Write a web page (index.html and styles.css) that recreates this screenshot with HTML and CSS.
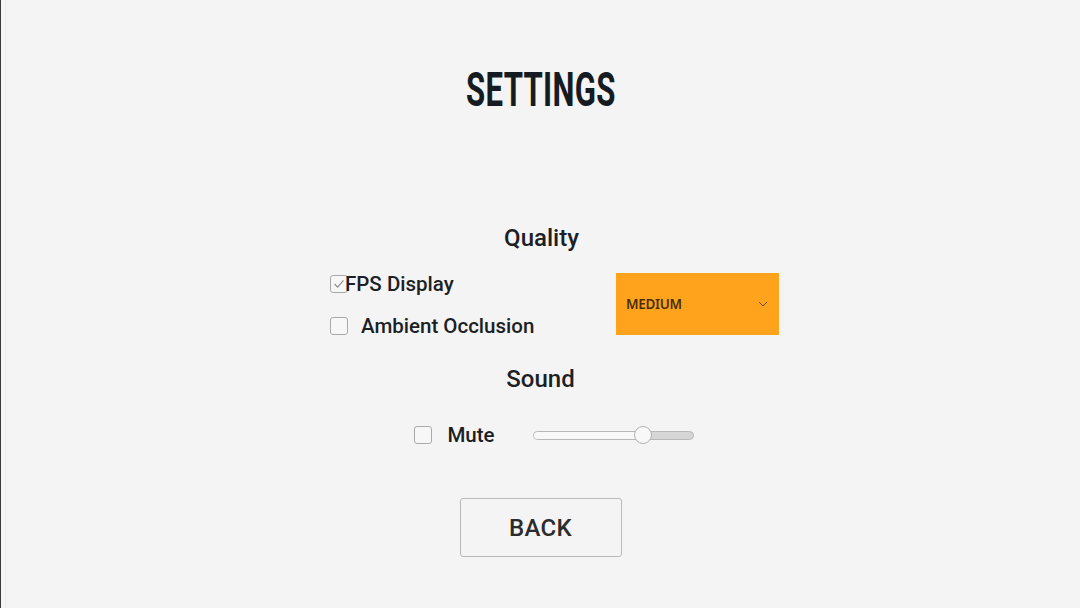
FILE: index.html
```html
<!DOCTYPE html>
<html>
<head>
<meta charset="utf-8">
<link rel="stylesheet" href="styles.css">
</head>
<body>
<div class="screen">
  <h1 class="title"><span class="title-text">SETTINGS</span></h1>
  <h2 class="section-title quality-title">Quality</h2>
  <div class="quality-row">
    <div class="checks">
      <label class="check check-tight">
        <span class="box checked"><svg viewBox="0 0 18 18" width="18" height="18"><path d="M4 9 L7.5 12.5 L14 5" fill="none" stroke="#8a8a8a" stroke-width="1.2"/></svg></span>
        <span class="check-label">FPS Display</span>
      </label>
      <label class="check">
        <span class="box"></span>
        <span class="check-label">Ambient Occlusion</span>
      </label>
    </div>
    <div class="dropdown">
      <span class="dropdown-text">MEDIUM</span>
      <svg class="chevron" viewBox="0 0 10 6" width="10" height="6"><path d="M1 1 L5 5 L9 1" fill="none" stroke="#6b4a1a" stroke-width="1"/></svg>
    </div>
  </div>
  <h2 class="section-title sound-title">Sound</h2>
  <div class="sound-row">
    <label class="check">
      <span class="box"></span>
      <span class="check-label">Mute</span>
    </label>
    <div class="slider">
      <div class="slider-fill" style="width:69%"></div>
      <div class="slider-thumb" style="left:69%"></div>
    </div>
  </div>
  <button class="back">BACK</button>
</div>
</body>
</html>
```
FILE: styles.css
```css
html, body {
  margin: 0;
  padding: 0;
  height: 100%;
}
body {
  background: #f4f4f4;
  font-family: Roboto, "Liberation Sans", sans-serif;
  color: #1c1f24;
}
.screen {
  box-sizing: border-box;
  height: 608px;
  border-left: 1px solid #3a3a3a;
  display: flex;
  flex-direction: column;
  align-items: center;
  position: relative;
}
.screen::before {
  content: "";
  position: absolute;
  left: 4px;
  top: 0;
  bottom: 0;
  width: 1px;
  background: #ebebeb;
}
.title {
  margin: 60px 0 0;
  font-family: Roboto, "Liberation Sans", sans-serif;
  font-weight: 700;
  font-size: 49px;
  line-height: 60px;
  color: #161b22;
  text-align: center;
  width: 300px;
}
.title-text {
  display: inline-block;
  transform: scaleX(0.635);
  letter-spacing: 0.5px;
}
.section-title {
  margin: 0;
  font-size: 24px;
  font-weight: 500;
  line-height: 28px;
  color: #1c1f24;
}
.quality-title {
  margin-top: 104px;
  margin-left: 2px;
}
.quality-row {
  display: flex;
  align-items: flex-start;
  width: 449px;
  margin-left: 28px;
  margin-top: 21px;
}
.checks {
  display: flex;
  flex-direction: column;
  gap: 22px;
  width: 286px;
  padding-top: 1px;
}
.check {
  display: flex;
  align-items: center;
  gap: 13px;
  font-size: 20.5px;
  font-weight: 500;
  line-height: 20px;
  color: #1c1f24;
}
.check-tight {
  gap: 0;
}
.check-tight .box {
  margin-right: -3px;
}
.box {
  box-sizing: border-box;
  width: 18px;
  height: 18px;
  border: 1px solid #a9a9a9;
  border-radius: 3px;
  background: #f7f7f7;
  display: flex;
  align-items: center;
  justify-content: center;
  flex: none;
}
.box svg {
  display: block;
}
.dropdown {
  width: 163px;
  height: 62px;
  background: #ffa31c;
  display: flex;
  align-items: center;
  justify-content: space-between;
  padding: 0 11px 0 10px;
  box-sizing: border-box;
}
.dropdown-text {
  font-family: "Noto Sans", "Open Sans", sans-serif;
  font-size: 13.5px;
  font-weight: 600;
  color: #4a2e0a;
  letter-spacing: -0.3px;
}
.chevron {
  display: block;
}
.sound-title {
  margin-top: 29px;
}
.sound-row {
  display: flex;
  align-items: center;
  margin-top: 32px;
  margin-left: 27px;
}
.sound-row .check {
  gap: 15px;
}
.slider {
  position: relative;
  margin-left: 38px;
  width: 161px;
  height: 9px;
  box-sizing: border-box;
  border: 1px solid #b8b8b8;
  border-radius: 5px;
  background: #d6d6d6;
}
.slider-fill {
  height: 100%;
  background: #f8f8f8;
  border-radius: 4px 0 0 4px;
}
.slider-thumb {
  position: absolute;
  top: 50%;
  width: 18px;
  height: 18px;
  box-sizing: border-box;
  border: 1px solid #b0b0b0;
  border-radius: 50%;
  background: #f8f8f8;
  transform: translate(-50%, -50%);
}
.back {
  margin-top: 53px;
  width: 162px;
  height: 59px;
  box-sizing: border-box;
  border: 1px solid #b9b9b9;
  border-radius: 3px;
  background: #f4f4f4;
  font-family: Roboto, "Liberation Sans", sans-serif;
  font-size: 24px;
  font-weight: 500;
  color: #2c2c2c;
  letter-spacing: 0.3px;
}
```
